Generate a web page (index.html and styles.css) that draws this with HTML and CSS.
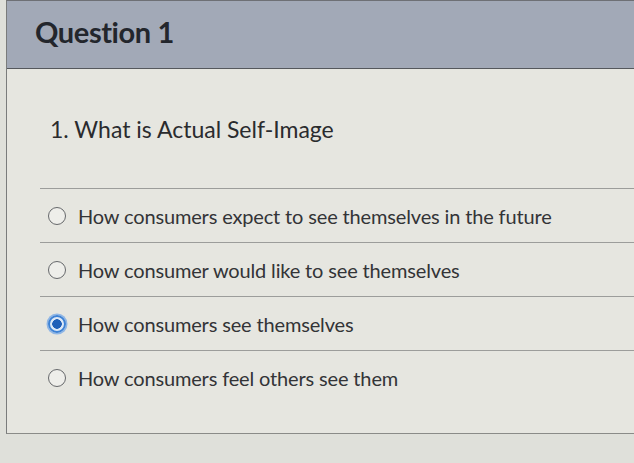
FILE: index.html
```html
<!DOCTYPE html>
<html>
<head>
<meta charset="utf-8">
<link rel="stylesheet" href="styles.css">
</head>
<body>
<div class="card">
  <div class="header">
    <h1 class="title">Question 1</h1>
  </div>
  <div class="content">
    <p class="question">1. What is Actual Self-Image</p>
    <div class="options">
      <div class="option"><span class="radio"></span><span class="label">How consumers expect to see themselves in the future</span></div>
      <div class="option"><span class="radio"></span><span class="label">How consumer would like to see themselves</span></div>
      <div class="option"><span class="radio checked"></span><span class="label">How consumers see themselves</span></div>
      <div class="option last"><span class="radio"></span><span class="label">How consumers feel others see them</span></div>
    </div>
  </div>
</div>
</body>
</html>
```
FILE: styles.css
```css
html, body {
  margin: 0;
  padding: 0;
  background: #dfe0da;
  font-family: Lato, "Open Sans", sans-serif;
  color: #2e2e30;
  overflow: hidden;
}
.card {
  margin-left: 6px;
  border-left: 1px solid #7a7c7c;
  border-top: 1px solid #6e7075;
  border-bottom: 1px solid #8a8b88;
  background: #e6e6e0;
  height: 434px;
  box-sizing: border-box;
}
.header {
  height: 68px;
  background: #a2a9b7;
  border-bottom: 1px solid #55585c;
  box-sizing: border-box;
  padding-left: 28px;
  display: flex;
  align-items: center;
}
.title {
  margin: 0 0 6px 0;
  font-size: 29px;
  font-weight: 700;
  color: #23262c;
  letter-spacing: -0.4px;
}
.content {
  padding-left: 33px;
}
.question {
  margin: 46px 0 0 10px;
  font-size: 23px;
  line-height: 28px;
  color: #2a2b2e;
}
.options {
  margin-top: 45px;
}
.option {
  height: 54px;
  border-top: 1px solid #9c9d9b;
  box-sizing: border-box;
  display: flex;
  align-items: center;
  padding-left: 8px;
}
.radio {
  width: 18px;
  height: 18px;
  border: 1.5px solid #66686b;
  border-radius: 50%;
  box-sizing: border-box;
  background: #eeeeea;
  margin-right: 12px;
  flex: none;
}
.radio.checked {
  border: 2px solid #3d82d6;
  background: radial-gradient(circle, #1f5fb8 0 4.5px, #dce8f6 5px);
  box-shadow: 0 0 0 1.5px #8fb6e6;
}
.label {
  font-size: 20px;
  color: #333437;
  letter-spacing: -0.15px;
}
```
